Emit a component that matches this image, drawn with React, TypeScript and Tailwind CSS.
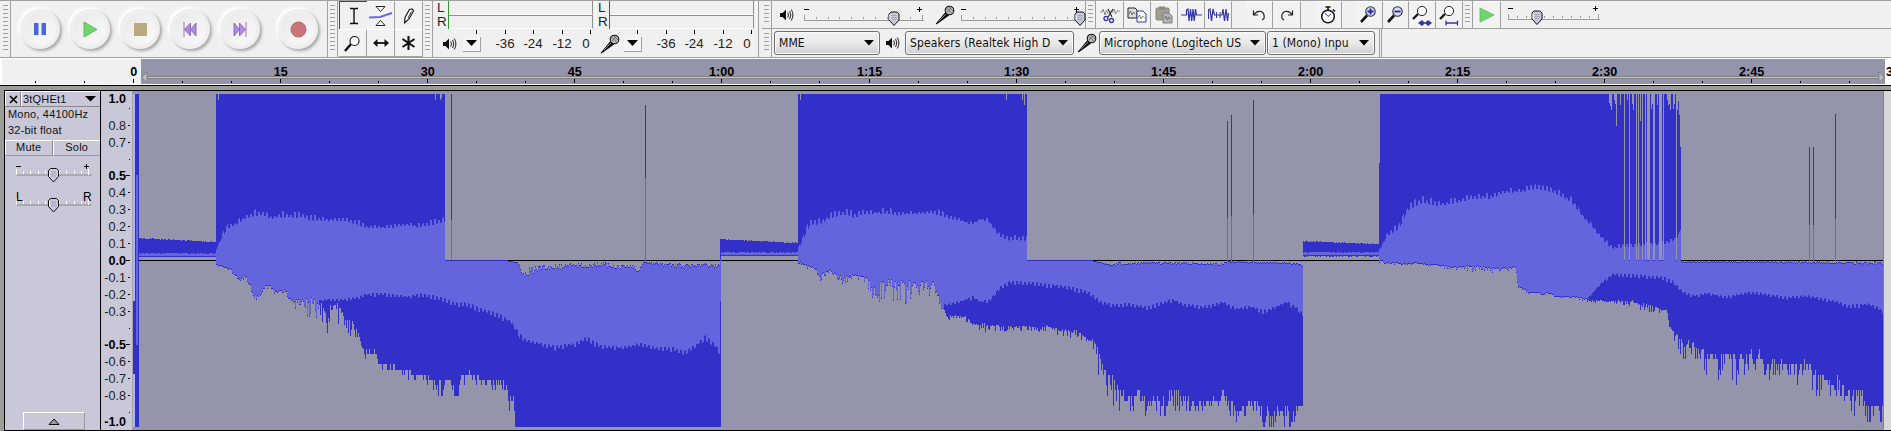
import React from "react";

type Pt = [number, number, number];

/* ---------- waveform model ---------- */

const pts = (ox: number, oy: number, list: string): Pt[] =>
  list.split(" ").map((s) => {
    const [x, y, a] = s.split(",").map(Number);
    return [ox + x / 3, oy + y / 3, a || 0];
  });

const at = (p: Pt[], x: number): [number, number] => {
  if (x <= p[0][0]) return [p[0][1], p[0][2]];
  for (let i = 1; i < p.length; i++) {
    if (x <= p[i][0]) {
      const t = (x - p[i - 1][0]) / (p[i][0] - p[i - 1][0] || 1);
      return [p[i - 1][1] + t * (p[i][1] - p[i - 1][1]), p[i - 1][2] + t * (p[i][2] - p[i - 1][2])];
    }
  }
  const l = p[p.length - 1];
  return [l[1], l[2]];
};

const rnd = (n: number) => {
  const v = Math.sin(n * 12.9898) * 43758.5453;
  return v - Math.floor(v);
};

const TOP = 94;
const ZERO = 260;
const END = 427;

const LOW: Pt[] = [
  ...pts(200, 85, "48,540,1 90,552,1 115,585,5 135,572,2 165,630,5 180,632,5 200,597,5 225,620,3 255,615,2 270,645,4 320,648,14 360,655,14 380,680,20 410,660,14 440,710,12 460,715,10 480,760,2 490,800,8 505,800,4 520,790,4 535,840,3 590,845,4 620,860,8 690,880,6 700,885,16 740,885,16 775,885,16 800,862,6 860,885,6 910,895,8 925,915,14 935,940,22 944,960,20 945,1026,0 1300,1026,0"),
  ...pts(500, 85, "660,1026,0 662,1026,0"),
  ...pts(780, 85, "54,535,2 100,550,3 120,570,5 150,555,2 180,578,6 230,572,3 260,580,4 270,600,14 280,605,14 320,595,14 350,597,16 400,597,15 460,597,8 480,655,4 500,695,4 520,690,3 555,695,4 580,718,2 610,718,6 700,726,4 800,724,4 860,738,7 890,738,5 920,762,3 945,775,16 965,840,22 985,880,26 1000,890,20 1020,925,14 1060,930,14 1080,915,12"),
  ...pts(1080, 85, "110,920,14 130,935,14 180,925,12 200,955,14 240,935,20 290,920,14 340,960,10 400,945,14 430,925,16 470,975,10 520,945,14 550,975,14 600,970,16 630,980,16 645,965,8 667,960,6"),
  ...pts(1370, 85, "30,528,2 90,536,2 140,535,1 200,541,1 250,547,4 320,545,4 360,553,4 437,547,2 442,603,2 480,623,2 540,625,2 555,636,0 620,638,2 650,645,2 720,648,2 790,650,5 850,666,5 890,677,2 897,725,4 920,752,14 960,780,22"),
  ...pts(1590, 50, "285,880,16 300,880,16 340,910,16 375,920,20 400,912,16 420,920,22 440,920,22 500,905,16 530,935,14 600,945,14 640,945,18 680,970,18 720,1000,14 745,985,12 770,1015,18 800,1015,24 840,1065,18 880,1065,16"),
];

const HIGH: Pt[] = [
  ...pts(200, 85, "735,525 920,525"),
  ...pts(500, 85, "22,527 52,532 66,555,7 100,540,8 130,537,6 180,535,6 200,530,4 260,535,5 310,528,5 350,540,4 400,536,4 412,555,3 430,528,1 500,532,5 560,536,5 600,534,3 655,538,4 661,548"),
  ...pts(780, 85, "741,525 930,525 960,530,1 990,538,2 1020,530,2"),
  ...pts(1080, 85, "60,530,1 85,537,2 110,530,3 150,533,2 200,529,2 420,534,2 440,528,1 560,529,2 650,533,1 667,542,1"),
  ...pts(1590, 50, "272,633,1 880,633,3"),
];

const RMS_HIGH: Pt[] = [
  ...pts(200, 85, "48,490,1 60,465,3 80,430,4 120,408,4 140,395,5 180,385,4 215,398,4 240,392,5 300,392,5 340,403,4 440,405,3 480,420,4 500,427,2 560,428,3 620,418,2 650,425,3 700,416,4 735,407,4"),
  ...pts(780, 85, "54,490,1 70,455,4 90,415,5 120,412,5 150,395,4 190,385,5 225,393,5 250,385,3 320,382,4 350,388,4 400,385,2 450,380,4 500,395,4 540,405,3 575,418,2 600,402,2 625,408,3 655,450,3 680,463,3 740,463,4"),
  ...pts(1370, 85, "30,490,1 50,450,3 85,430,5 110,375,5 150,350,6 200,358,4 260,350,3 310,337,4 360,338,4 400,320,4 450,320,3 495,307,4 550,320,4 600,345,4 630,385,3 670,430,3 720,488,3 800,482,2 890,474,2 920,460,2 932,430,1"),
];

const RMS_LOW: Pt[] = [
  ...pts(200, 85, "48,900 355,900 356,645,1 390,645,3 450,642,2 500,628,2 550,626,3 620,635,2 660,628,3 720,638,4 760,655,3 800,655,4 850,675,4 900,690,4"),
  ...pts(500, 85, "30,710,4 60,752,4 80,768,3 130,778,3 170,785,4 220,778,4 260,757,4 300,783,4 370,788,3 420,775,3 470,790,3 520,790,4 550,800,3 590,780,4 615,755,4 640,775,4 660,800,3"),
  ...pts(780, 85, "54,900 489,900 490,660,3 540,650,3 575,635,3 600,650,3 630,645,3 660,605,3 690,590,3 760,594,3 850,604,3 900,614,3"),
  ...pts(1080, 85, "30,625,3 60,650,3 100,660,3 140,657,3 200,667,3 240,655,3 275,643,3 310,658,2 370,665,3 430,652,2 470,672,3 510,665,3 550,677,3 590,665,2 620,650,3 650,670,3 667,688,3"),
  ...pts(1370, 85, "30,900 645,900 650,642,1 690,597,2 725,567,2 800,570,3 880,578,3"),
  ...pts(1590, 50, "245,692,3 275,725,3 310,737,2 350,730,2 400,740,2 440,735,2 480,725,2 530,733,2 590,742,2 650,737,2 700,747,2 740,755,2 770,767,3 840,762,3 865,775,2 880,790,2"),
];

const GAPS = new Set([1624, 1629, 1636, 1638, 1642, 1645, 1647, 1648, 1649, 1653, 1654, 1659, 1660, 1661, 1663, 1676]);
const NOTCHES: Record<number, number> = {
  218: 100, 435: 100, 440: 100, 441: 98, 800: 100, 1006: 100, 1022: 100, 1024: 105,
  1609: 103, 1610: 106, 1611: 110, 1614: 100, 1615: 104, 1616: 126, 1620: 105, 1627: 100, 1632: 104, 1633: 110,
  1640: 121, 1651: 109, 1652: 104, 1657: 105, 1667: 100, 1668: 105, 1669: 104, 1670: 110, 1673: 109, 1674: 104, 1677: 110, 1678: 101, 1679: 115, 1680: 147,
};

const col = (x: number, a: number, b: number) => (b > a ? `M${x} ${a}h1V${b}h-1z` : "");
const clean = (v: number) => Math.round(v);

const buildWave = () => {
  let dark = "";
  let light = "";
  for (let x = 216; x < 1883; x++) {
    const quiet = (x >= 721 && x < 798) || (x >= 1303 && x < 1379);
    if (quiet) continue;
    const burst = (x >= 216 && x < 445) || (x >= 798 && x < 1027) || (x >= 1379 && x < 1681);
    const [lb, la] = at(LOW, x);
    const spike = rnd(x * 1.7) > 0.62 ? 0.3 + rnd(x * 3.1 + 4) : rnd(x * 3.1) * 0.5 - 0.25;
    let low = lb + la * spike;
    if (low > 350) low = 94 + Math.round((low - 94) / 5.2) * 5.2;
    low = Math.min(END, clean(low));

    const [hb, ha] = at(HIGH, x);
    let high = clean(hb + ha * rnd(x * 2.3));
    let gap = false;
    if (burst) {
      gap = GAPS.has(x);
      high = gap ? ZERO : NOTCHES[x] ?? TOP;
      if (x === 1379) high = 163;
    }
    if (x === 720) {
      dark += col(x, 239, END);
      light += col(x, 260, 301);
      continue;
    }
    dark += col(x, high, low);

    const comb = x % 4 < 2 ? 0.25 * rnd(x * 4.3) : 0.5 + 0.9 * rnd(Math.floor(x / 2) * 5.7);
    let lt = high + 1;
    if (burst && !gap) {
      const [r, ra] = at(RMS_HIGH, x);
      lt = clean(r + ra * 0.45 - ra * comb * 1.2);
    }
    const [q, qa] = at(RMS_LOW, x);
    const lw = Math.min(low - 1, clean(q - qa * 0.4 + qa * comb * 1.1));
    light += col(x, lt, lw);
  }
  const quietRuns: [number, number, number, number, number][] = [
    [139, 216, 238, 242, 257],
    [721, 798, 239, 243, 256],
    [1303, 1379, 241, 244, 256],
  ];
  quietRuns.forEach(([a, b, y0, y1, base], i) => {
    for (let x = a; x < b; x++) {
      const t = (x - a) / (b - a);
      const top = clean(y0 + (y1 - y0) * t + (rnd(x * 2.9) - 0.4));
      const wob = i === 2 && rnd(x) > 0.6 ? 1 : 0;
      dark += col(x, top, base + wob);
      light += col(x, base - 4 + (rnd(x * 1.3) > 0.7 ? 1 : 0), base - 1);
    }
  });
  const spikes: [number, number, number][] = [
    [451, 94, 220], [645, 105, 178], [1227, 121, 218], [1231, 115, 216], [1253, 100, 215],
    [1809, 147, 225], [1813, 147, 225], [1835, 114, 219],
  ];
  spikes.forEach(([x, y, m]) => {
    dark += col(x, y, m);
    light += col(x, m, 262);
  });
  return { dark, light };
};

const Waveform = () => {
  const { dark, light } = buildWave();
  return (
    <svg width="1752" height="339" viewBox="132 91 1752 339" shapeRendering="crispEdges" className="block shrink-0">
      <rect x="132" y="91" width="1752" height="339" fill="#9494aa" />
      <rect x="139" y="260" width="1744" height="1" fill="#000" />
      <path d={dark} fill="#3230c8" />
      <path d={light} fill="#6464dc" />
      <rect x="445" y="260" width="62" height="1" fill="#3230c8" />
      <rect x="1027" y="260" width="64" height="1" fill="#3230c8" />
      <rect x="133" y="94" width="2" height="333" fill="#b4b4fa" />
      <rect x="133" y="301" width="2" height="73" fill="#3230c8" />
      <rect x="135" y="94" width="4" height="333" fill="#3230c8" />
      <rect x="136" y="175" width="2" height="170" fill="#6464dc" />
      <rect x="132" y="91" width="1" height="339" fill="#a4a4ae" />
      <rect x="1883" y="91" width="1" height="339" fill="#808088" />
    </svg>
  );
};

/* ---------- rulers ---------- */

const TIMES = ["0", "15", "30", "45", "1:00", "1:15", "1:30", "1:45", "2:00", "2:15", "2:30", "2:45", "3:00"];

const TimeRuler = () => (
  <svg width="1891" height="27" viewBox="0 58 1891 27" className="block shrink-0" shapeRendering="crispEdges">
    <rect x="0" y="58" width="1891" height="27" fill="#fff" />
    <rect x="2" y="59" width="139" height="25" fill="#f0f0f0" />
    <rect x="141" y="59" width="1744" height="25" fill="#9494aa" />
    <path d="M147 76.5H1878M147 78.5H1878" stroke="#808080" />
    <path d="M147 77.5H1878" stroke="#c4c4c8" />
    <g shapeRendering="auto" fill="#c0c0c0" stroke="#787880" strokeWidth="0.8">
      <path d="M147 72v11l-5-5.5z" />
      <path d="M1879 72v11l5-5.5z" />
    </g>
    {TIMES.map((t, i) => {
      const x = Math.floor(133.5 + i * 147.12);
      return (
        <g key={t}>
          {i < 12 && <rect x={x} y="79" width="1" height="4" fill="#000" />}
          {i < 12 && <rect x={x + 49} y="81" width="1" height="2" fill="#000" />}
          {i < 12 && <rect x={x + 98} y="81" width="1" height="2" fill="#000" />}
          <text x={x + 0.7} y="76" textAnchor="middle" fontSize="12.6" fontWeight={700} fontFamily="'Liberation Sans', Arial, sans-serif">
            {t}
          </text>
        </g>
      );
    })}
    <rect x="35" y="81" width="1" height="2" />
    <rect x="84" y="81" width="1" height="2" />
  </svg>
);

const LEVELS: [string, number][] = [
  ["1.0", 98.5], ["0.8", 125.5], ["0.7", 142.5], ["0.5", 175.5], ["0.4", 192.5], ["0.3", 209.5], ["0.2", 226.5], ["0.1", 243.5],
  ["0.0", 260.5], ["-0.1", 277.5], ["-0.2", 294.5], ["-0.3", 311.5], ["-0.5", 344.5], ["-0.6", 361.5], ["-0.7", 378.5],
  ["-0.8", 395.5], ["-1.0", 421.5],
];

const LevelRuler = () => (
  <svg width="31" height="339" viewBox="101 91 31 339" className="block shrink-0">
    <rect x="101" y="91" width="31" height="339" fill="#c8c8d8" />
    {LEVELS.map(([t, y]) => {
      const bold = /^-?(1\.0|0\.5|0\.0)$/.test(t);
      return (
        <g key={t}>
          <text x="126" y={y + 4.5} textAnchor="end" fontSize="12.6" fontWeight={bold ? 700 : 400} fill={bold ? "#000" : "#222"} fontFamily="'Liberation Sans', Arial, sans-serif">
            {t}
          </text>
          {!/1\.0/.test(t) && <rect x={bold ? 126 : 128} y={Math.floor(y)} width={bold ? 4 : 2} height="1" />}
        </g>
      );
    })}
    {[108, 159, 328, 412].map((y) => (
      <rect key={y} x="129" y={y} width="1" height="1" />
    ))}
  </svg>
);

/* ---------- small parts ---------- */

const Grabber = ({ tall = false }: { tall?: boolean }) => (
  <div className="flex w-[10px] shrink-0 justify-center border-r border-[#a0a0a0] bg-[#f0f0f0] pt-[4px]">
    <svg width="5" height={tall ? 50 : 20} shapeRendering="crispEdges">
      {Array.from({ length: tall ? 12 : 5 }, (_, i) => (
        <rect key={i} y={i * 4} width="5" height="1" fill="#a0a0a0" />
      ))}
    </svg>
  </div>
);

const Speaker = () => (
  <svg width="15" height="14" viewBox="0 0 15 14" className="shrink-0">
    <path d="M1 5h2.500L7 1.500v11L3.500 9H1z" fill="#111" />
    <path d="M8.700 4.500q1.600 2.500 0 5M10.600 3q2.500 4 0 8M12.300 1.500q3.200 5.500 0 11" fill="none" stroke="#222" strokeWidth="1" />
  </svg>
);

const Mic = () => (
  <svg width="20" height="20" viewBox="0 0 20 20" className="shrink-0">
    <path d="M1 19L10.500 7.500l3 3L3 18z" fill="#111" stroke="#000" strokeWidth="0.8" />
    <path d="M4 16l7-7" stroke="#999" strokeWidth="0.9" />
    <circle cx="14.500" cy="5.500" r="4.300" fill="#b8b8b8" stroke="#111" strokeWidth="1.100" />
    <path d="M12 3.500l4.500 4.500M14 2l4 4M12 7l4-4.500" stroke="#555" strokeWidth="0.7" />
  </svg>
);

const Thumb = ({ x, y }: { x: number; y: number }) => (
  <g transform={`translate(${x} ${y})`}>
    <path d="M-5 2l2-2h6l2 2v6L0 13.500L-5 8z" fill="#c9c9de" stroke="#111" strokeWidth="1" />
    <path d="M-2.500 3.500h5M-2.500 5.500h5M-2.500 7.500h5" stroke="#9a9ab4" strokeWidth="0.8" />
    <path d="M-4 2.500V8" stroke="#fff" />
  </g>
);

const Slider = ({ width, thumb, ticks }: { width: number; thumb: number; ticks: number }) => (
  <svg width={width + 10} height="26" viewBox={`0 0 ${width + 10} 26`} className="block shrink-0">
    <g shapeRendering="crispEdges" fill="#9c9c9c">
      <rect x="2" y="18" width={width - 2} height="1" />
      {Array.from({ length: ticks }, (_, i) => {
        const edge = i === 0 || i === ticks - 1;
        return <rect key={i} x={2 + Math.round((i * (width - 4)) / (ticks - 1))} y={edge ? 13 : 15} width="1" height={edge ? 5 : 2} />;
      })}
      <path d={`M2 7h5v1h-5zM${width - 7} 7h5v1h-5zM${width - 5} 5h1v5h-1z`} fill="#000" />
    </g>
    <Thumb x={thumb} y={10} />
  </svg>
);

const Combo = ({ text, box, label = "" }: { text: string; box: string; label?: string }) => (
  <div className={`flex h-[24px] shrink-0 items-center justify-between rounded-[3px] border border-[#707070] bg-linear-to-b from-[#f2f2f2] via-[#e9e9e9] to-[#cfcfcf] pr-[5px] pl-[4px] shadow-[inset_0_0_0_1px_#fafafa] ${box}`}>
    <span className={`overflow-hidden font-['DejaVu_Sans_Condensed','DejaVu_Sans',sans-serif] text-[12px] leading-[16px] tracking-[0.120px] whitespace-nowrap text-[#111] [font-stretch:condensed] ${label}`}>
      {text}
    </span>
    <svg width="10" height="6" className="shrink-0">
      <path d="M0 0h10L5 5.500z" />
    </svg>
  </div>
);

const RoundButton = ({ children, box = "" }: { children: React.ReactNode; box?: string }) => (
  <div className={`flex size-[40px] shrink-0 items-center justify-center rounded-full bg-[#efefef] shadow-[2px_2px_3px_#a9a9a9,-2px_-2px_3px_#ffffff] ${box}`}>
    <div className="flex size-[32px] items-center justify-center rounded-full bg-linear-to-br from-[#e8e8e8] to-[#fafafa]">{children}</div>
  </div>
);

const Cell = ({ children, box = "w-[27px]" }: { children?: React.ReactNode; box?: string }) => (
  <div className={`flex shrink-0 items-center justify-center border-t border-r border-t-white border-r-[#a0a0a0] bg-[#f2f2f2] ${box}`}>{children}</div>
);

const Lens = ({ children }: { children?: React.ReactNode }) => (
  <svg width="20" height="20" viewBox="0 0 20 20">
    <path d="M2 17L8 10.500" stroke="#111" strokeWidth="2.600" />
    <circle cx="11.500" cy="6.500" r="4.700" fill="#d8d8f4" stroke="#333" strokeWidth="1.100" />
    {children}
  </svg>
);

/* ---------- toolbars ---------- */

const Transport = () => (
  <div className="flex w-[317px] shrink-0 items-center border-r border-[#a0a0a0] bg-[#f0f0f0] pl-[9px]">
    <RoundButton>
      <svg width="14" height="14"><path d="M1 1h4.500v12H1zM8.500 1H13v12H8.500z" fill="#4a64dc" /></svg>
    </RoundButton>
    <RoundButton box="ml-[10px]">
      <svg width="15" height="17"><path d="M1 1l13 7.500L1 16z" fill="#6ed66e" stroke="#50b050" strokeWidth="0.8" /></svg>
    </RoundButton>
    <RoundButton box="ml-[10px]">
      <svg width="13" height="13"><rect width="13" height="13" fill="#b9a981" /></svg>
    </RoundButton>
    <RoundButton box="ml-[10px]">
      <svg width="14" height="15"><path d="M1 0v15M1.500 7.500L7.500 1v13zM7.500 7.500L13 1v13z" fill="#b08adc" stroke="#8a62bc" strokeWidth="0.9" /></svg>
    </RoundButton>
    <RoundButton box="ml-[10px]">
      <svg width="14" height="15"><path d="M13 0v15M12.500 7.500L6.500 1v13zM6.500 7.500L1 1v13z" fill="#b08adc" stroke="#8a62bc" strokeWidth="0.9" /></svg>
    </RoundButton>
    <RoundButton box="ml-[18px]">
      <svg width="17" height="17"><circle cx="8.500" cy="8.500" r="7.500" fill="#c87478" stroke="#b06468" /></svg>
    </RoundButton>
  </div>
);

const Tools = () => (
  <div className="grid w-[85px] shrink-0 grid-cols-[28px_28px_28px] grid-rows-[28px_28px] border-r border-[#a0a0a0] pl-px">
    <div className="flex items-center justify-center border-t border-l border-[#444] bg-[#f0f0f0] pl-px">
      <svg width="12" height="18"><path d="M2 1.500h3l1 1 1-1h3M2 16.500h3l1-1 1 1h3M6 2.500v13" fill="none" stroke="#111" strokeWidth="1.400" /></svg>
    </div>
    <Cell box="">
      <svg width="26" height="22" viewBox="0 0 26 22">
        <path d="M1 12.500l11-.5 12-4" fill="none" stroke="#6a6ae0" strokeWidth="2" />
        <path d="M8 1.500h9l-4.500 5zM8 20.500h9l-4.500-5z" fill="#fff" stroke="#222" />
      </svg>
    </Cell>
    <Cell box="">
      <svg width="14" height="18" viewBox="0 0 14 18">
        <path d="M2.500 16l.5-5.500 4.500-8q3-1.500 4 1.500L7 12z" fill="#fff" stroke="#111" strokeWidth="1.100" />
        <path d="M9.500 4.500l-3.500 6.500M2.500 15.500l1.500-2" stroke="#333" strokeWidth="1" />
      </svg>
    </Cell>
    <Cell box="border-b border-b-[#a0a0a0]">
      <svg width="17" height="17" viewBox="0 0 17 17"><path d="M1 16l6-7" stroke="#111" strokeWidth="2.400" /><circle cx="10.500" cy="6" r="4.500" fill="#fff" stroke="#111" strokeWidth="1.100" /></svg>
    </Cell>
    <Cell box="border-b border-b-[#a0a0a0]">
      <svg width="18" height="10" viewBox="0 0 18 10"><path d="M3 5h12" stroke="#111" strokeWidth="1.800" /><path d="M1 5l4.500-4v8zM17 5l-4.500-4v8z" fill="#111" /></svg>
    </Cell>
    <Cell box="border-b border-b-[#a0a0a0]">
      <svg width="15" height="16" viewBox="0 0 15 16"><path d="M7.500 1v14M1.500 4l12 8M13.500 4l-12 8" stroke="#111" strokeWidth="2.100" /></svg>
    </Cell>
  </div>
);

const Meter = ({ icon, mark, box }: { icon: React.ReactNode; mark: string; box: string }) => (
  <div className={`flex h-[56px] shrink-0 flex-col overflow-hidden font-['Liberation_Sans',Arial,sans-serif] text-[13.300px] text-[#222] ${box}`}>
    <div className="flex h-[28px]">
      <div className="flex w-[12px] shrink-0 flex-col pl-px text-[13.500px] leading-[14px]">
        <span>L</span>
        <span>R</span>
      </div>
      <div className={`flex w-[145px] shrink-0 flex-col border-l ${mark}`}>
        <div className="h-[14px] border-r border-b border-t-0 border-r-[#909090] border-b-white" />
        <div className="h-[14px] border-t border-r border-b border-t-[#8c8c8c] border-r-[#909090] border-b-white" />
      </div>
      <div className="ml-[2px] w-px bg-white" />
    </div>
    <svg width="160" height="5" shapeRendering="crispEdges" className="shrink-0">
      {[40, 69, 97, 126, 154].map((x) => <rect key={x} x={x} y="1" width="1" height="4" />)}
    </svg>
    <div className="flex h-[20px] items-center">
      <div className="flex w-[26px] justify-center">{icon}</div>
      <div className="ml-px flex h-[15px] w-[18px] items-center justify-center border-r border-b border-[#a0a0a0] bg-[#f4f4f4]">
        <svg width="11" height="7"><path d="M0 0h11L5.500 6z" /></svg>
      </div>
      <span className="ml-[10px] w-[28px] text-center">-36</span>
      <span className="w-[28px] text-center">-24</span>
      <span className="w-[30px] text-center">-12</span>
      <span className="w-[18px] text-center">0</span>
    </div>
  </div>
);

const wave = "#3434a8";

const EditBar = () => (
  <>
    <Cell>
      <svg width="20" height="18" viewBox="0 0 20 18">
        <path d="M0 6h2l1-3 2 6 1.500-5L8 8M12 7l2-4 1.500 5L17 5h3" fill="none" stroke="#888" />
        <path d="M8 3l4 8M13 3l-5 8" stroke="#222" strokeWidth="1.100" />
        <circle cx="6" cy="12.500" r="2" fill="none" stroke={wave} strokeWidth="1.300" />
        <circle cx="11.500" cy="14.500" r="2" fill="none" stroke={wave} strokeWidth="1.300" />
      </svg>
    </Cell>
    <Cell>
      <svg width="20" height="16" viewBox="0 0 20 16">
        <path d="M1 1h7l2 2v8H1z" fill="#ddd" stroke="#222" />
        <path d="M2 7l1.500-3L5 8l1.500-3L8 7" fill="none" stroke="#555" strokeWidth="0.8" />
        <path d="M10 4h6l3 3v8h-9z" fill="#fff" stroke={wave} />
        <path d="M11 11l1.500-3 1.500 4 1.500-3 2 2" fill="none" stroke="#666" strokeWidth="0.8" />
      </svg>
    </Cell>
    <Cell>
      <svg width="18" height="18" viewBox="0 0 18 18">
        <rect x="1" y="2" width="13" height="12" rx="1" fill="#a2a08c" stroke="#888678" />
        <rect x="4" y="0.500" width="6" height="3" fill="#888" />
        <path d="M8 7h6l3 3v7H8z" fill="#b4b4c0" stroke="#7c7c88" />
        <path d="M9.500 13l1.500-3 1.500 4 1.500-3 1.500 2" fill="none" stroke="#666" strokeWidth="0.8" />
      </svg>
    </Cell>
    <Cell>
      <svg width="21" height="16" viewBox="0 0 21 16" className="shrink-0">
        <path d="M0 8h5.500V3l1.500-1 1 12L9.500 2l1.200 12L12 2l1.200 12L14.500 2l1 6H21" fill="none" stroke={wave} strokeWidth="1.200" />
      </svg>
    </Cell>
    <Cell>
      <svg width="21" height="16" viewBox="0 0 21 16" className="shrink-0">
        <path d="M.5 12V3L2 2l1.500 12L5 2l1.500 6h7.500L15 2l1.500 12L18 2l1.500 12 1-8" fill="none" stroke={wave} strokeWidth="1.200" />
        <path d="M8.500 5v6M12 5v6" stroke={wave} />
      </svg>
    </Cell>
    <Cell box="ml-[14px] w-[27px]">
      <svg width="14" height="12" viewBox="0 0 14 12"><path d="M1.500 1.500v4.500h4.500M2 5.500q3-4 7-3 4 1.500 3 7l-2 1.500" fill="none" stroke="#222" strokeWidth="1.200" /></svg>
    </Cell>
    <Cell box="w-[28px]">
      <svg width="14" height="12" viewBox="0 0 14 12"><path d="M12.500 1.500v4.500H8M12 5.500q-3-4-7-3-4 1.500-3 7l2 1.500" fill="none" stroke="#222" strokeWidth="1.200" /></svg>
    </Cell>
    <Cell box="ml-[14px] w-[27px]">
      <svg width="16" height="18" viewBox="0 0 16 18">
        <circle cx="8" cy="10.500" r="6.300" fill="#fff" stroke="#111" strokeWidth="1.500" />
        <path d="M5.500 1h5M8 1v3M13 3.500l2 2" stroke="#111" strokeWidth="1.600" />
        <path d="M5 7l3 3.500L11 8" fill="none" stroke={wave} />
      </svg>
    </Cell>
    <Cell box="ml-[14px] w-[27px]">
      <Lens><path d="M8.500 6.500h6M11.500 3.500v6" stroke="#2424a8" strokeWidth="1.800" /></Lens>
    </Cell>
    <Cell box="w-[26px]">
      <Lens><path d="M8.500 6.500h6" stroke="#2424a8" strokeWidth="1.800" /></Lens>
    </Cell>
    <Cell>
      <svg width="20" height="21" viewBox="0 0 20 21">
        <path d="M1 14l5-5" stroke="#111" strokeWidth="2.300" /><circle cx="10" cy="6" r="4.600" fill="#fff" stroke="#222" />
        <path d="M8 18h10" stroke={wave} strokeWidth="1.300" /><path d="M6 18l4-3v6zM13 18l-3-3v6zM13 18l3-3v6zM20 18l-4-3v6z" fill={wave} />
      </svg>
    </Cell>
    <Cell>
      <svg width="20" height="21" viewBox="0 0 20 21">
        <path d="M1 14l5-5" stroke="#111" strokeWidth="2.300" /><circle cx="10" cy="6" r="4.600" fill="#fff" stroke="#222" />
        <path d="M7 18h11M7 15.500v5M18.500 15.500v5" stroke={wave} strokeWidth="1.300" />
      </svg>
    </Cell>
  </>
);

const Toolbars = () => (
  <div className="flex h-[58px] shrink-0 border-t border-b border-t-[#a0a0a0] border-b-[#a0a0a0] bg-[#f0f0f0]">
    <div className="w-px shrink-0" />
    <Grabber tall />
    <Transport />
    <Grabber tall />
    <Tools />
    <Grabber tall />
    <div className="flex w-[326px] shrink-0 border-r border-[#a0a0a0] pl-[3px]">
      <Meter icon={<Speaker />} mark="border-l-[#309830]" box="w-[161px]" />
      <Meter icon={<Mic />} mark="border-l-[#b03030]" box="w-[161px]" />
    </div>
    <div className="w-[3px] shrink-0" />
    <div className="flex grow flex-col">
      <div className="flex h-[28px] border-b border-[#a0a0a0]">
        <Grabber />
        <div className="flex w-[314px] shrink-0 items-center border-r border-[#a0a0a0] pl-[7px]">
          <Speaker />
          <div className="w-[8px] shrink-0" />
          <Slider width={122} thumb={92} ticks={11} />
          <div className="w-[6px] shrink-0 -ml-[5px]" />
          <Mic />
          <div className="w-[4px] shrink-0" />
          <Slider width={122} thumb={121} ticks={11} />
        </div>
        <Grabber />
        <div className="w-px shrink-0" />
        <EditBar />
        <Grabber />
        <div className="w-px shrink-0" />
        <Cell>
          <svg width="16" height="16"><path d="M1 1l14 7-14 7z" fill="#6ed66e" stroke="#58b858" strokeWidth="0.8" /></svg>
        </Cell>
        <div className="w-[5px] shrink-0" />
        <Slider width={94} thumb={31} ticks={11} />
      </div>
      <div className="flex h-[28px] items-center">
        <div className="flex h-full">
          <Grabber />
        </div>
        <Combo text="MME" box="ml-[2px] w-[106px]" />
        <div className="flex w-[25px] shrink-0 justify-center">
          <Speaker />
        </div>
        <Combo text="Speakers (Realtek High D" box="w-[169px]" label="w-[142px]" />
        <div className="flex w-[25px] shrink-0 justify-center">
          <Mic />
        </div>
        <Combo text="Microphone (Logitech US" box="w-[167px]" label="w-[142px]" />
        <Combo text="1 (Mono) Inpu" box="ml-px w-[108px]" />
        <div className="ml-[4px] h-full w-[3px] border-x border-[#a0a0a0]" />
      </div>
    </div>
  </div>
);

/* ---------- track ---------- */

const PanelSlider = ({ left, right }: { left: React.ReactNode; right: React.ReactNode }) => (
  <svg width="80" height="30" viewBox="0 0 80 30" className="block" fontFamily="'Liberation Sans', Arial, sans-serif" fontSize="12">
    <rect x="3" y="16" width="76" height="2" fill="#aaaab0" />
    {Array.from({ length: 11 }, (_, i) => (
      <rect key={i} x={3 + Math.round(i * 7.2)} y={i % 10 ? 13 : 11} width="1" height={i % 10 ? 3 : 6} fill="#fff" />
    ))}
    {left}
    {right}
    <Thumb x={40.5} y={10.5} />
  </svg>
);

const TrackPanel = () => (
  <div className="flex h-[339px] w-[96px] shrink-0 flex-col border-r border-black bg-[#c8c8d8] font-['Liberation_Sans',Arial,sans-serif] text-[11px] tracking-[0.200px] text-[#111]">
    <div className="flex h-[15px] shrink-0 border-t border-l border-white">
      <div className="flex w-[15px] items-center justify-center border-r border-[#888]">
        <svg width="9" height="9"><path d="M1 1l7 7M8 1L1 8" stroke="#000" strokeWidth="1.600" /></svg>
      </div>
      <div className="flex grow items-center justify-between border-l border-white pr-[4px] pl-px">
        <span className="leading-[13px]">3tQHEt1</span>
        <svg width="11" height="6"><path d="M0 0h11L5.500 5.500z" /></svg>
      </div>
    </div>
    <div className="h-px shrink-0 bg-[#888]" />
    <div className="flex h-[33px] shrink-0 flex-col pl-[3px] leading-[16px]">
      <span className="-mt-px">Mono, 44100Hz</span>
      <span>32-bit float</span>
    </div>
    <div className="grid h-[16px] shrink-0 grid-cols-2 border-b border-[#999] text-center leading-[13px]">
      <span className="border-t border-r border-l border-t-white border-r-[#888] border-l-white">Mute</span>
      <span className="border-t border-l border-white">Solo</span>
    </div>
    <div className="mt-[2px] pl-[8px]">
      <PanelSlider left={<path d="M3 8.500h5" stroke="#111" />} right={<path d="M71 8.500h5M73.500 6v5" stroke="#111" />} />
      <PanelSlider left={<text x="3" y="13">L</text>} right={<text x="70" y="13">R</text>} />
    </div>
    <div className="mt-auto ml-[18px] flex h-[18px] w-[62px] items-center justify-center border border-t-white border-r-[#999] border-b-[#999] border-l-white">
      <svg width="12" height="7"><path d="M1 6.500h10L6 1z" fill="#999aa8" stroke="#111" /></svg>
    </div>
  </div>
);

export default function App() {
  return (
    <div className="flex h-[431px] w-[1891px] flex-col overflow-hidden bg-[#f0f0f0]">
      <Toolbars />
      <TimeRuler />
      <div className="h-px shrink-0 bg-black" />
      <div className="flex h-[345px] shrink-0 bg-[#9c9c98]">
        <div className="w-[4px] shrink-0" />
        <div className="mt-[4px] flex h-[341px] w-[1887px] shrink-0 border-t border-b border-l border-black bg-[#d8d8d8]">
          <TrackPanel />
          <LevelRuler />
          <Waveform />
        </div>
      </div>
    </div>
  );
}
